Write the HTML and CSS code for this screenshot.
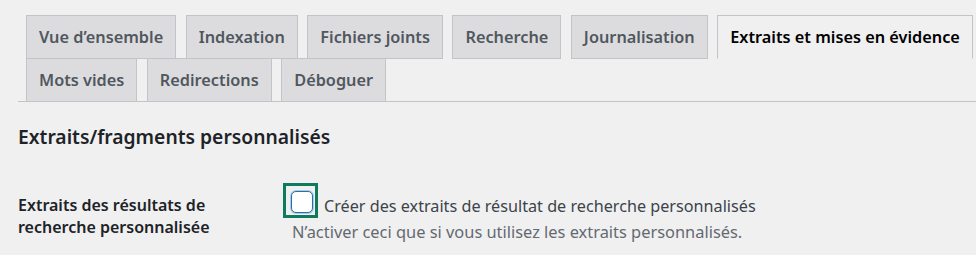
FILE: index.html
```html
<!DOCTYPE html>
<html lang="fr">
<head>
    <meta charset="UTF-8">
    <meta name="viewport" content="width=device-width, initial-scale=1.0">
    <title>Réglages Relevanssi</title>
    <link rel="stylesheet" href="styles.css">
</head>
<body>
    <div class="wrap">
        <nav class="nav-tabs">
            <a href="#" class="nav-tab">Vue d’ensemble</a>
            <a href="#" class="nav-tab">Indexation</a>
            <a href="#" class="nav-tab">Fichiers joints</a>
            <a href="#" class="nav-tab">Recherche</a>
            <a href="#" class="nav-tab">Journalisation</a>
            <a href="#" class="nav-tab nav-tab-active">Extraits et mises en évidence</a>
            <a href="#" class="nav-tab">Mots vides</a>
            <a href="#" class="nav-tab">Redirections</a>
            <a href="#" class="nav-tab">Déboguer</a>
        </nav>

        <h2 class="section-title">Extraits/fragments personnalisés</h2>

        <div class="form-row">
            <div class="row-label">
                <label for="custom_excerpts">Extraits des résultats de recherche personnalisée</label>
            </div>
            <div class="row-field">
                <label class="check-line" for="custom_excerpts">
                    <span class="focus-ring"><input type="checkbox" id="custom_excerpts"></span>
                    Créer des extraits de résultat de recherche personnalisés
                </label>
                <p class="description">N’activer ceci que si vous utilisez les extraits personnalisés.</p>
            </div>
        </div>
    </div>
</body>
</html>
```

FILE: styles.css
```css
:root {
    --page-bg: #f0f0f1;
    --tab-bg: #dcdcde;
    --tab-border: #c3c4c7;
    --text-dark: #1d2327;
    --text-main: #3c434a;
    --text-muted: #646970;
    --focus-green: #0f7a5c;
    --wp-blue: #2271b1;
}

* {
    margin: 0;
    padding: 0;
    box-sizing: border-box;
}

body {
    font-family: "Noto Sans", "Open Sans", sans-serif;
    background-color: var(--page-bg);
    color: var(--text-main);
    font-size: 16.3px;
}

.wrap {
    padding: 15px 0 0 18px;
}

/* onglets */
.nav-tabs {
    display: flex;
    flex-wrap: wrap;
    border-bottom: 1px solid var(--tab-border);
}

.nav-tab {
    display: block;
    margin-left: 9.5px;
    margin-bottom: -1px;
    padding: 6px 12px;
    height: 44px;
    line-height: 30px;
    font-size: 16.3px;
    border: 1px solid var(--tab-border);
    background: var(--tab-bg);
    color: #50575e;
    font-weight: 600;
    text-decoration: none;
    white-space: nowrap;
}

.nav-tab:first-child,
.nav-tab:nth-child(7) {
    margin-left: 8px;
}

.nav-tab-active {
    background: var(--page-bg);
    border-bottom-color: var(--page-bg);
    color: #000;
}

.section-title {
    color: var(--text-dark);
    font-size: 19.3px;
    font-weight: 600;
    line-height: 26px;
    margin: 22px 0 0;
}

/* ligne du formulaire */
.form-row {
    display: flex;
    margin-top: 43px;
}

.row-label {
    width: 274px;
    flex-shrink: 0;
    padding-top: 2px;
}

.row-label label {
    display: block;
    width: 210px;
    color: var(--text-dark);
    font-size: 16px;
    font-weight: 600;
    line-height: 21.5px;
}

.check-line {
    display: flex;
    align-items: center;
    gap: 6px;
    line-height: 24px;
    font-size: 16.2px;
}

.focus-ring {
    display: inline-flex;
    border: 3.5px solid var(--focus-green);
    padding: 5px 2px 2px 5px;
    margin-left: -9px;
    margin-top: -10px;
}

.focus-ring input {
    appearance: none;
    width: 22px;
    height: 22px;
    border: 1.5px solid var(--wp-blue);
    border-radius: 5px;
    background: #fff;
    box-shadow: 0 0 0 1px rgba(34, 113, 177, 0.3);
}

.description {
    color: var(--text-muted);
    font-size: 16.4px;
    line-height: 24px;
    margin-top: 2px;
}
```
